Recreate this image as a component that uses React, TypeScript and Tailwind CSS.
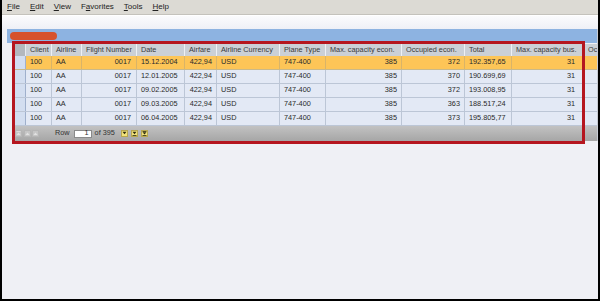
import React from 'react'

type Col = { label: string; w: string; right?: boolean; pad: string }

const cols: Col[] = [
  { label: 'Client', w: 'w-[26px]', pad: 'pl-[4px]' },
  { label: 'Airline', w: 'w-[30px]', pad: 'pl-[4px]' },
  { label: 'Flight Number', w: 'w-[55px]', right: true, pad: 'pl-[4px] pr-[5px]' },
  { label: 'Date', w: 'w-[48px]', pad: 'pl-[4px]' },
  { label: 'Airfare', w: 'w-[32px]', right: true, pad: 'pl-[4px] pr-[4px]' },
  { label: 'Airline Currency', w: 'w-[63px]', pad: 'pl-[4px]' },
  { label: 'Plane Type', w: 'w-[46px]', pad: 'pl-[4px]' },
  { label: 'Max. capacity econ.', w: 'w-[76px]', right: true, pad: 'pl-[4px] pr-[4px]' },
  { label: 'Occupied econ.', w: 'w-[63px]', right: true, pad: 'pl-[4px] pr-[4px]' },
  { label: 'Total', w: 'w-[47px]', pad: 'pl-[4px]' },
  { label: 'Max. capacity bus.', w: 'w-[72px]', right: true, pad: 'pl-[4px] pr-[8px]' },
]

const rows = [
  ['100', 'AA', '0017', '15.12.2004', '422,94', 'USD', '747-400', '385', '372', '192.357,65', '31'],
  ['100', 'AA', '0017', '12.01.2005', '422,94', 'USD', '747-400', '385', '370', '190.699,69', '31'],
  ['100', 'AA', '0017', '09.02.2005', '422,94', 'USD', '747-400', '385', '372', '193.008,95', '31'],
  ['100', 'AA', '0017', '09.03.2005', '422,94', 'USD', '747-400', '385', '363', '188.517,24', '31'],
  ['100', 'AA', '0017', '06.04.2005', '422,94', 'USD', '747-400', '385', '373', '195.805,77', '31'],
]

function MenuBar() {
  const items: [string, string, string][] = [
    ['', 'F', 'ile'],
    ['', 'E', 'dit'],
    ['', 'V', 'iew'],
    ['F', 'a', 'vorites'],
    ['', 'T', 'ools'],
    ['', 'H', 'elp'],
  ]
  return (
    <div className="h-[15px] bg-[#dcdad4] flex items-center gap-[10px] pl-[5px] text-[8px] text-[#222] border-b border-[#c4c2bc]">
      {items.map(([a, u, b]) => (
        <span key={u + b}>
          {a}
          <span className="underline">{u}</span>
          {b}
        </span>
      ))}
    </div>
  )
}

function PagerBtn({ kind, active }: { kind: number; active?: boolean }) {
  const c = active ? '#2a2a10' : '#e2e2e2'
  return (
    <div
      className={
        active
          ? 'w-[7px] h-[7px] bg-[#f2e27a] border border-[#b8a850] flex items-center justify-center'
          : 'w-[7px] h-[7px] bg-[#c6c6c6] border border-[#b6b6b6] flex items-center justify-center'
      }
    >
      <svg width="5" height="5" viewBox="0 0 5 5">
        {active ? (
          <>
            {kind === 2 && <rect x="0.5" y="0" width="4" height="0.8" fill={c} />}
            <polygon points={kind === 2 ? '0.5,1.3 4.5,1.3 2.5,3.5' : '0.5,0.8 4.5,0.8 2.5,3.3'} fill={c} />
            {kind >= 1 && <rect x="0.5" y="4" width="4" height="0.8" fill={c} />}
          </>
        ) : (
          <>
            {kind === 0 && <rect x="0.5" y="0.2" width="4" height="0.8" fill={c} />}
            <polygon points="0.5,4 4.5,4 2.5,1.5" fill={c} />
          </>
        )}
      </svg>
    </div>
  )
}

export default function App() {
  return (
    <div className="relative w-[600px] h-[301px] overflow-hidden bg-[#eff0f5] border-l-2 border-r-2 border-b-2 border-black font-['Liberation_Sans',Arial,sans-serif] text-[#2a2a2a]">
      <MenuBar />
      <div className="h-[14px] bg-gradient-to-b from-[#fbfbfd] to-[#eef0f6] border-t border-white" />
      <div className="ml-[5px] border-r border-[#c8ccd4]">
        <div className="h-[14px] bg-[#8db3e1] flex items-center pl-[3px]">
          <div className="w-[47px] h-[8px] rounded-full bg-[#d6522c]" />
        </div>
        <div className="pl-[7px] pt-[1px] text-[7.3px]">
          {/* header */}
          <div className="flex h-[12px] bg-[#cbd0d6] text-[#3a3a3a]">
            <div className="w-[12px] shrink-0 bg-[#b3b8be] border-r border-[#e8eaee]" />
            {cols.map((c) => (
              <div
                key={c.label}
                className={`${c.w} shrink-0 flex items-center pl-[4px] border-r border-[#eef0f3] whitespace-nowrap overflow-hidden`}
              >
                {c.label}
              </div>
            ))}
            <div className="flex-1 flex items-center pl-[4px] whitespace-nowrap overflow-hidden">Occupied bus.</div>
          </div>
          {/* rows */}
          {rows.map((r, i) => (
            <div
              key={i}
              className={
                i === 0
                  ? 'flex h-[14px] bg-[#fdc557] border-b border-[#c9b98a]'
                  : 'flex h-[14px] bg-[#e3e9f5] border-b border-[#bcc6d6]'
              }
            >
              <div className="w-[12px] shrink-0 bg-[#d3def0] border-r border-[#9fb0cc]" />
              {cols.map((c, j) => (
                <div
                  key={j}
                  className={`${c.w} ${c.pad} shrink-0 flex items-center whitespace-nowrap overflow-hidden border-r ${
                    i === 0 ? 'border-[#d9b468]' : 'border-[#bcc6d6]'
                  } ${c.right ? 'justify-end' : ''}`}
                >
                  {r[j]}
                </div>
              ))}
              <div className="flex-1" />
            </div>
          ))}
          {/* pager */}
          <div className="h-[15px] bg-gradient-to-b from-[#c2c2c2] to-[#a6a6a6] flex items-center pl-[1px] text-[#333]">
            <div className="flex gap-[1.5px]">
              <PagerBtn kind={0} />
              <PagerBtn kind={1} />
              <PagerBtn kind={2} />
            </div>
            <span className="ml-[16px]">Row</span>
            <div className="ml-[4px] w-[18px] h-[8px] bg-white border border-[#8a8a8a] flex items-center justify-end pr-[2px]">1</div>
            <span className="ml-[3px]">of 395</span>
            <div className="ml-[6px] flex gap-[3px]">
              <PagerBtn kind={0} active />
              <PagerBtn kind={1} active />
              <PagerBtn kind={2} active />
            </div>
          </div>
        </div>
      </div>
      {/* red highlight frame */}
      <div className="absolute left-[10px] top-[41px] w-[573px] h-[103px] border-[3px] border-[#b5161f] pointer-events-none" />
    </div>
  )
}
